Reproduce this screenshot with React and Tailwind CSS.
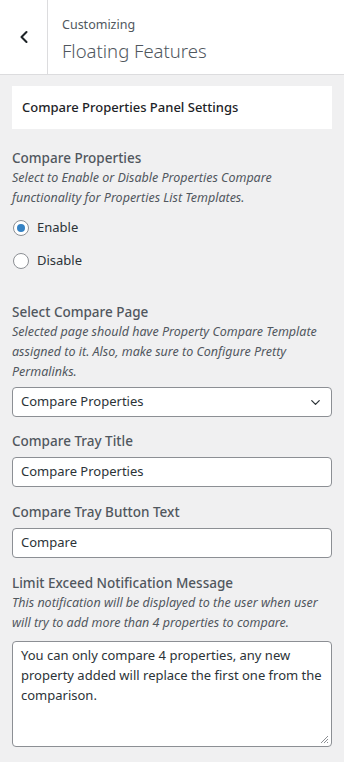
import React from "react";
import { ChevronLeft, ChevronDown } from "lucide-react";

const font = { fontFamily: '"Noto Sans", "Open Sans", sans-serif' };

function Label({ children }) {
  return <p className="text-[13.5px] font-medium leading-5 text-[#50575e]">{children}</p>;
}

function Desc({ children }) {
  return <p className="text-[12.5px] italic leading-5 text-[#50575e]">{children}</p>;
}

function Radio({ label, checked }) {
  return (
    <label className="flex h-4 items-center gap-2 text-[13px] text-[#2c3338]">
      <span className="flex h-4 w-4 items-center justify-center rounded-full border border-[#8c8f94] bg-white">
        {checked && <span className="h-2 w-2 rounded-full bg-[#3582c4]" />}
      </span>
      {label}
    </label>
  );
}

function Field({ value }) {
  return (
    <div className="flex h-[30px] items-center rounded border border-[#8c8f94] bg-white px-2 text-[13px] text-[#2c3338]">
      {value}
    </div>
  );
}

export default function App() {
  return (
    <div className="min-h-[762px] w-[344px] bg-[#f0f0f1]" style={font}>
      <div className="flex h-[75px] border-b border-[#dcdcde] bg-white">
        <div className="flex w-12 items-center justify-center border-r border-[#dcdcde] text-[#1d2327]">
          <ChevronLeft className="h-5 w-5" strokeWidth={2.5} />
        </div>
        <div className="flex flex-col pl-[14px] pt-[15px] text-[#50575e]">
          <span className="text-[12.5px] leading-5">Customizing</span>
          <span className="mt-[2px] text-[18.5px] font-light leading-7">Floating Features</span>
        </div>
      </div>

      <div className="px-3 pt-[11px]">
        <div className="flex h-[43px] items-center bg-white px-[10px] text-[13px] font-medium text-[#1d2327]">
          Compare Properties Panel Settings
        </div>

        <div className="mt-[19px]">
          <Label>Compare Properties</Label>
          <Desc>
            Select to Enable or Disable Properties Compare functionality for Properties List Templates.
          </Desc>
          <div className="mt-3 flex flex-col gap-[17px] pl-[1px]">
            <Radio label="Enable" checked />
            <Radio label="Disable" />
          </div>
        </div>

        <div className="mt-[33px]">
          <Label>Select Compare Page</Label>
          <Desc>
            Selected page should have Property Compare Template assigned to it. Also, make sure to
            Configure Pretty Permalinks.
          </Desc>
          <div className="mt-[5px] flex h-[30px] items-center justify-between rounded border border-[#8c8f94] bg-white pl-2 pr-2 text-[13px] text-[#2c3338]">
            <span>Compare Properties</span>
            <ChevronDown className="h-[15px] w-[15px] text-[#2c3338]" strokeWidth={2} />
          </div>
        </div>

        <div className="mt-[14px]">
          <Label>Compare Tray Title</Label>
          <div className="mt-[6px]">
            <Field value="Compare Properties" />
          </div>
        </div>

        <div className="mt-[15px]">
          <Label>Compare Tray Button Text</Label>
          <div className="mt-[6px]">
            <Field value="Compare" />
          </div>
        </div>

        <div className="mt-[15px]">
          <Label>Limit Exceed Notification Message</Label>
          <Desc>
            This notification will be displayed to the user when user will try to add more than 4
            properties to compare.
          </Desc>
          <div className="relative mt-2 h-[106px] rounded border border-[#8c8f94] bg-white px-2 pt-[3px] text-[13px] leading-5 text-[#2c3338]">
            You can only compare 4 properties, any new property added will replace the first one from
            the comparison.
            <svg className="absolute bottom-[2px] right-[2px]" width="10" height="10" viewBox="0 0 10 10">
              <path d="M9 2 L2 9 M9 5 L5 9 M9 8 L8 9" stroke="#8c8f94" strokeWidth="1" />
            </svg>
          </div>
        </div>
      </div>
    </div>
  );
}
